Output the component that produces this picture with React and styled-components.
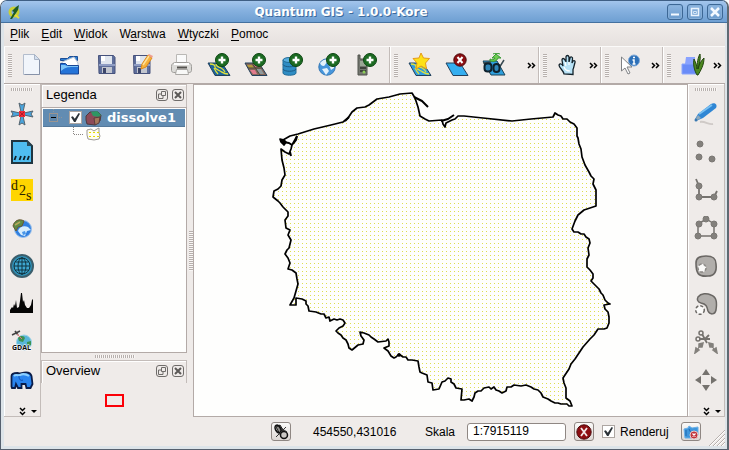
import React, { useState } from "react";
import styled, { createGlobalStyle } from "styled-components";

const GlobalStyle = createGlobalStyle`
  * {
    box-sizing: border-box;
  }
  body {
    margin: 0;
    background: #ffffff;
    font-family: "Liberation Sans", Arial, sans-serif;
    font-size: 12px;
    color: #000000;
  }
  button {
    font: inherit;
    color: inherit;
    margin: 0;
    padding: 0;
    border: none;
    background: none;
  }
  svg {
    display: block;
    flex: none;
  }
`;

const Window = styled.div`
  display: flex;
  flex-direction: column;
  min-height: 100vh;
  border: 1px solid #56606e;
  border-top-color: #3f5f84;
  border-right: 2px solid #5f6a72;
  border-radius: 7px 7px 0 0;
  background: #dde4e9;
  overflow: hidden;
`;

const TitleBar = styled.header`
  display: flex;
  align-items: center;
  height: 22px;
  padding: 0 4px 0 6px;
  background: linear-gradient(#a3c5ec, #86b1df 45%, #6e9fd2);
  border-bottom: 1px solid #44719f;

  h1 {
    flex: 1;
    margin: 0 8px 0 0;
    text-align: center;
    font-family: "DejaVu Sans", sans-serif;
    font-size: 12px;
    line-height: 20px;
    font-weight: bold;
    color: #ffffff;
    text-shadow: 1px 1px 0 #3c6a9c;
  }
`;

const WindowButtons = styled.div`
  display: flex;
  gap: 4px;
`;

const WindowButton = styled.button`
  display: flex;
  align-items: center;
  justify-content: center;
  width: 16px;
  height: 16px;
  border: 1px solid #3c6795;
  border-radius: 3px;
  background: linear-gradient(#8db5e0, #6c9ccd);
  box-shadow: inset 0 0 0 1px #86afd9;
`;

const Content = styled.div`
  display: flex;
  flex-direction: column;
  flex: 1;
  margin: 0 2px 3px 3px;
  background: #efebe9;
`;

const MenuBar = styled.nav`
  display: flex;
  align-items: center;
  gap: 12px;
  height: 23px;
  padding: 0 6px 2px;
  background: linear-gradient(#f1edeb, #e6e1de);

  button {
    line-height: 16px;
  }
  u {
    text-underline-offset: 2px;
  }
`;

const ToolbarRow = styled.div`
  display: flex;
  height: 38px;
  border-top: 1px solid #fbfaf9;
  border-bottom: 1px solid #b3aaa7;
`;

const Toolbar = styled.div`
  display: flex;
  align-items: center;
  flex: ${({ $grow }) => ($grow ? "1 0 auto" : "none")};
  padding: 0 0 0 4px;
  border-right: 1px solid #c3bcb9;
  box-shadow: inset 1px 0 0 #ffffff;

  &:last-child {
    border-right-color: #efebe9;
  }
`;

const Handle = styled.div`
  flex: none;
  width: ${({ $wide }) => ($wide ? $wide : 4)}px;
  height: ${({ $tall }) => ($tall ? $tall : 3)}px;
  background: ${({ $wide }) =>
    $wide
      ? "repeating-linear-gradient(90deg, #b7b0ad 0 1px, #f9f7f6 1px 2px)"
      : "repeating-linear-gradient(#b7b0ad 0 1px, #f9f7f6 1px 2px)"};
`;

const ToolButton = styled.button`
  display: flex;
  align-items: center;
  justify-content: center;
  flex: none;
  width: 37px;
  height: 36px;

  ${Handle} + & {
    margin-left: 3px;
  }
  &:last-child {
    margin-right: 4px;
  }
`;

const MoreButton = styled.button`
  display: flex;
  align-items: center;
  justify-content: center;
  width: 13px;
  height: 36px;
  margin-left: auto;
`;

const Body = styled.main`
  display: flex;
  flex: 1;
`;

const SideBar = styled.aside`
  display: flex;
  flex-direction: column;
  align-items: center;
  flex: none;
  width: 37px;
  padding-top: 4px;
  border-right: 1px solid #c3bcb9;
  border-bottom: 1px solid #c3bcb9;
  box-shadow: inset 1px 1px 0 #ffffff;
`;

const SideButton = styled(ToolButton)`
  width: 34px;
  height: 38px;
`;

const SideTools = styled.div`
  padding-top: 4px;
  flex: 1;

  ${SideButton} {
    margin: 0;
  }
`;

const SideMore = styled.button`
  display: flex;
  align-items: center;
  height: 10px;
  padding-left: 13px;
`;

const Docks = styled.div`
  display: flex;
  flex-direction: column;
  flex: none;
  width: 147px;
`;

const Dock = styled.section`
  display: flex;
  flex-direction: column;
  flex: ${({ $fill }) => ($fill ? 1 : "none")};
`;

const DockHeader = styled.div`
  display: flex;
  align-items: center;
  gap: 4px;
  height: 23px;
  margin-right: 1px;
  padding: 0 2px 2px 4px;
  border: 1px solid #c3bcb9;
  border-bottom: none;
  box-shadow: inset 1px 1px 0 #ffffff;

  h2 {
    flex: 1;
    margin: 0;
    font-size: 13px;
    line-height: 16px;
    font-weight: normal;
  }
`;

const DockButton = styled.button`
  display: flex;
  align-items: center;
  justify-content: center;
  width: 12px;
  height: 12px;
  border: 1px solid #6f6c6a;
  border-radius: 3px;
`;

const Tree = styled.ul`
  flex: 1;
  list-style: none;
  margin: 0 1px 0 0;
  padding: 1px;
  border: 1px solid #b3aaa7;
  background: #fefefd;
`;

const LayerRow = styled.li`
  display: flex;
  align-items: center;
  height: 18px;
  padding-left: 6px;
  background: #628cb2;
  border-bottom: 1px solid #55799b;
  color: #ffffff;
  font-family: "DejaVu Sans", sans-serif;
  font-size: 13px;
  line-height: 16px;
  font-weight: bold;

  label {
    margin-left: 5px;
  }
`;

const SymbolRow = styled.li`
  display: flex;
  align-items: center;
  height: 14px;
  padding-left: 30px;
`;

const TreeToggle = styled.button`
  display: flex;
  width: 20px;
  height: 17px;
`;

const CheckBox = styled.input.attrs({ type: "checkbox" })`
  appearance: none;
  display: grid;
  place-items: center;
  flex: none;
  width: 13px;
  height: 13px;
  margin: 0;
  border: 1px solid #ada6a2;
  background: #ffffff;

  &:checked::before {
    content: "";
    width: 9px;
    height: 9px;
    background: #2b3238;
    clip-path: polygon(0 45%, 20% 35%, 42% 65%, 85% 0, 100% 8%, 50% 100%, 34% 100%);
  }
`;

const Splitter = styled.div`
  display: flex;
  align-items: center;
  justify-content: center;
  flex: none;
  ${({ $vertical }) => ($vertical ? "width: 5px;" : "height: 7px;")}
`;

const Extent = styled.div`
  display: flex;
  align-items: center;
  justify-content: center;
  height: 34px;

  span {
    width: 19px;
    height: 13px;
    border: 2px solid #fb0007;
  }
`;

const Canvas = styled.section`
  display: flex;
  align-items: flex-start;
  justify-content: center;
  flex: 1;
  min-width: 0;
  overflow: hidden;
  background: #fefefd;
  border: 1px solid #b3aaa7;
`;

const StatusBar = styled.footer`
  display: flex;
  align-items: center;
  justify-content: flex-end;
  gap: 8px;
  height: 29px;
`;

const StatusText = styled.span`
  min-width: ${({ $wide }) => ($wide ? 118 : 34)}px;
  padding-left: ${({ $wide }) => ($wide ? 14 : 0)}px;
  line-height: 16px;
`;

const StatusButton = styled.button`
  display: flex;
  align-items: center;
  justify-content: center;
  width: 20px;
  height: 19px;
  border: 1px solid #8f8783;
  border-radius: 3px;
  background: linear-gradient(#fbfaf9, #ddd7d4);
`;

const ScaleLabel = styled.label`
  display: flex;
  align-items: center;
  gap: 8px;
`;

const ScaleInput = styled.input`
  width: 99px;
  height: 18px;
  padding: 0 5px 2px;
  border: 1px solid #8f8783;
  border-radius: 3px;
  background: #ffffff;
  font: inherit;
  color: inherit;
`;

const RenderLabel = styled.label`
  display: flex;
  align-items: center;
  gap: 5px;
  min-width: 71px;
  line-height: 16px;
`;

const Grip = styled.div`
  align-self: flex-end;
  width: 16px;
  height: 16px;
`;

/* ---- icons ---- */

const Icon = ({ size = 24, children }) => (
  <svg width={size} height={size} viewBox={`0 0 ${size} ${size}`} aria-hidden="true">
    {children}
  </svg>
);

const Plus = () => (
  <g>
    <circle cx="15" cy="7" r="6.5" fill="#1c6b22" stroke="#0c4512" />
    <path d="M15 3.5v7M11.5 7h7" stroke="#fff" strokeWidth="2.4" />
  </g>
);

const Cross = () => (
  <g>
    <circle cx="15" cy="7" r="6.2" fill="#8d0e12" stroke="#4e0a0c" />
    <path d="M12.5 4l5 6M17.5 4l-5 6" stroke="#fff" strokeWidth="2" />
  </g>
);

const Sheet = ({ fill = "#2a9fe0" }) => (
  <path d="M1 10h14l8 12.5H8z" fill={fill} stroke="#22405c" />
);

const Rivers = () => (
  <path
    d="M3 11c3 0 5 1 5 3s3 3 5 4 4 3 8 3M9 11c0 3 3 3 5 4s3 2 4 4M7 15c1 2 2 4 4 6"
    fill="none"
    stroke="#dfe03c"
    strokeWidth="1.3"
  />
);

const Floppy = () => (
  <g>
    <path d="M2.5 2.5h15l1.5 2v16h-16z" fill="#5f6f9c" stroke="#46527c" />
    <path d="M5 3h11v8H5z" fill="#dfe5ee" />
    <path d="M5 3h4v5H5z" fill="#fff" />
    <path d="M3 12h16" stroke="#8f9dc4" strokeWidth="2" />
    <path d="M6 14h10v6H6z" fill="#c2c6cf" />
    <path d="M7 15h3v5H7z" fill="#3c466a" />
  </g>
);

const QgisIcon = () => (
  <Icon size={16}>
    <circle cx="7" cy="8" r="4" fill="none" stroke="#c9cf34" strokeWidth="3" />
    <path d="M3 15L7 8 5 7l4-4 3-2-1 5-2 3-4 6z" fill="#1e5b22" />
    <path d="M8 11l4 3" stroke="#e4dc3c" strokeWidth="2" />
  </Icon>
);

const NewIcon = () => (
  <Icon>
    <path d="M1.5 1.5h11l5 5v15h-16z" fill="#f1f5fb" stroke="#b3bdcd" />
    <path d="M17.5 7v14.5h-15" fill="none" stroke="#8792a8" />
    <path d="M12.5 1.5v5h5z" fill="#d3dfef" stroke="#a9b4c6" />
  </Icon>
);

const OpenIcon = () => (
  <Icon>
    <path d="M1.5 5.5h7l2-2h8v4h-17z" fill="#2d7ed2" stroke="#1d4e96" />
    <path d="M3 9l12-5 4 6v4H3z" fill="#fff" stroke="#b6c2d2" />
    <path d="M1.5 10.5h5l2 2h11v8.500h-18z" fill="#2574d8" stroke="#1a4795" />
    <path d="M2 18c5-5 10-4 17-4v-1H8l-2-1H2z" fill="#7cc4f8" />
  </Icon>
);

const SaveIcon = () => (
  <Icon>
    <Floppy />
  </Icon>
);

const SaveAsIcon = () => (
  <Icon>
    <g transform="translate(-2 0)">
      <Floppy />
    </g>
    <path d="M8 16l1-5 6-9 4 3-6 9z" fill="#f7b23a" stroke="#dd8a1c" />
    <path d="M15 2l1-1 4 2-1 2z" fill="#ef9d8e" />
    <path d="M10 12l6-9" stroke="#fde09a" strokeWidth="1.5" />
  </Icon>
);

const PrintIcon = () => (
  <Icon>
    <path d="M6.5 1.5h10v9h-10z" fill="#fafafa" stroke="#bab8b5" />
    <path
      d="M1.5 13.5c0-3 2-4 5-4h10c3 0 5 1 5 4v4c0 1-1 2-2 2h-16c-1 0-2-1-2-2z"
      fill="#dcdbd8"
      stroke="#9d9b98"
    />
    <path d="M4 11h15" stroke="#fff" strokeWidth="2" />
    <path d="M7 14.5h10" stroke="#55534f" strokeWidth="2" />
    <path d="M6.5 16.5h11l1 5h-13z" fill="#f8f8f7" stroke="#aaa8a5" />
  </Icon>
);

const VectorIcon = () => (
  <Icon>
    <Sheet fill="#1b649b" />
    <Rivers />
    <Plus />
  </Icon>
);

const RasterIcon = () => (
  <Icon>
    <Sheet fill="#85675b" />
    <path d="M3 12h5l2 3H5z" fill="#b39a3c" />
    <path d="M9 11h5l2 3h-5z" fill="#e06a86" />
    <path d="M6 17h5l2 4H9z" fill="#e27b8e" />
    <path d="M12 16h5l3 5h-5z" fill="#8f9a9c" />
    <path d="M4 15h14M8 10l8 12" stroke="#4c4a3a" />
    <Plus />
  </Icon>
);

const DatabaseIcon = () => (
  <Icon>
    <path d="M2 7v13c0 3 13 3 13 0V7z" fill="#2f8dc4" stroke="#236c98" />
    <ellipse cx="8.5" cy="7" rx="6.5" ry="2.5" fill="#58aede" stroke="#236c98" />
    <path d="M2 11.5c1 3 12 3 13 0M2 16c1 3 12 3 13 0" fill="none" stroke="#1c5b85" />
    <Plus />
  </Icon>
);

const WmsIcon = () => (
  <Icon>
    <circle cx="9" cy="14" r="8.2" fill="#4796dc" stroke="#3577b4" />
    <path
      d="M2 10c3-4 7-4 8-3s-2 3-3 5-4 1-5-2zM11 12l5-2v5l-3 2zM4 16l5-1 2 3-3 4z"
      fill="#e3f1fb"
    />
    <Plus />
  </Icon>
);

const GpsIcon = () => (
  <Icon>
    <path d="M3 6V2h2v4h7v16H3V7z" fill="#73766f" stroke="#50534c" />
    <path d="M5 8h6v5H5z" fill="#9aa795" />
    <path d="M5 15h6M5 18h6" stroke="#2e332c" strokeWidth="1.5" />
    <circle cx="9" cy="19" r="1.5" fill="#8ccf57" />
    <Plus />
  </Icon>
);

const NewLayerIcon = () => (
  <Icon>
    <Sheet fill="#2f9ce0" />
    <Rivers />
    <path
      d="M13 0l2.5 5 6 .5-4 4.5 1 6-5.500-3-5 3 1-6-4-4.500 6-.5z"
      fill="#fde116"
      stroke="#e59a17"
    />
  </Icon>
);

const RemoveLayerIcon = () => (
  <Icon>
    <Sheet fill="#35aef0" />
    <Cross />
  </Icon>
);

const OverviewIcon = () => (
  <Icon>
    <path d="M1 8h14l8 14H9z" fill="#2f9fdc" stroke="#1b4258" />
    <path d="M1 10l8-1M17 15l5-8" stroke="#3a4a52" strokeWidth="1.5" />
    <rect x="2.5" y="10.5" width="7" height="8" rx="3" fill="#2f86b8" stroke="#0f222e" strokeWidth="2" />
    <rect x="11.5" y="11" width="6" height="8" rx="3" fill="#2f86b8" stroke="#0f222e" strokeWidth="2" />
    <path
      d="M8 8c4 1 7 0 8-3h3l-5-4-4 4h3c-1 2-3 2-5 1zM18 1c-3-1-5-1-7 0"
      fill="#6ccc50"
      stroke="#3b9a36"
    />
  </Icon>
);

const HandIcon = () => (
  <Icon>
    <path
      d="M7 21c0-3-5-6-5-9 1-2 3-1 4 1L5 7c0-2 2-2 3 0l1 2V4c0-2 2.500-2 3 0v5l1-4c.5-2 3-1 2.500 1L15 10l1-2c1-1 2.500 0 2 1.500-1 3-1 5-2 7v5z"
      fill="#b8e2f6"
      stroke="#14222b"
      strokeWidth="1.3"
    />
    <path d="M7 14c1 3 3 4 6 4M8 9l1 4M12 9v3" fill="none" stroke="#fff" strokeWidth="1.2" />
  </Icon>
);

const IdentifyIcon = () => (
  <Icon>
    <path d="M2.5 4v14l3.5-3 3 6 2-1-3-6h5z" fill="#fff" stroke="#7f8184" />
    <circle cx="15" cy="7.5" r="5.5" fill="#2d70b8" stroke="#7fa9d8" />
    <path d="M14 4.5h2M13.500 7H15v4m-1.500 0h3" stroke="#fff" strokeWidth="1.5" fill="none" />
  </Icon>
);

const GrassIcon = () => (
  <Icon>
    <path d="M5 4h9v7H4z" fill="#8aa3ff" />
    <path d="M1 11h14l3 10H1z" fill="#6a8cf8" stroke="#8aa5fb" />
    <path
      d="M16 22C13 17 12 11 13 6c2 4 3 7 3 10 0-6 1-12 3-15 1 6-1 10-2 15 1-5 3-8 6-11 0 7-3 12-6 17z"
      fill="#4c8820"
      stroke="#23470f"
    />
  </Icon>
);

const CrossIcon = () => (
  <Icon>
    <path
      d="M11 10L9 1l3 2 3-2-2 9M11 14l-2 9 3-2 3 2-2-9M10 11L1 9l2 3-2 3 9-2M14 11l9-2-2 3 2 3-9-2"
      fill="#4aa5de"
      stroke="#56646e"
      strokeWidth="1"
      strokeLinejoin="round"
    />
    <path d="M9 9h6v6H9z" fill="#f02a38" />
    <path d="M10 10l4 4M14 10l-4 4" stroke="#b01a28" />
  </Icon>
);

const DelimitedIcon = () => (
  <Icon>
    <path d="M2 1h15l5 5v17H2z" fill="#4fbdf0" stroke="#1f3540" strokeWidth="2" />
    <path d="M17 1v5h5z" fill="#2b4a58" />
    <path
      d="M6 16l-1.500 4M11 16l-1.500 4M15 16l-1.500 4M19 16l-1.500 4"
      stroke="#102028"
      strokeWidth="1.8"
    />
  </Icon>
);

const Dxf2ShpIcon = () => (
  <Icon>
    <path d="M1 1h22v22H1z" fill="#ffd500" />
    <g fontFamily="Liberation Serif, serif" fontSize="14" fill="#2b2400">
      <text x="1" y="12">
        d
      </text>
      <text x="9" y="17">
        2
      </text>
      <text x="16" y="22">
        s
      </text>
    </g>
  </Icon>
);

const GeorefIcon = () => (
  <Icon>
    <circle cx="13" cy="13" r="8.5" fill="#3180e0" stroke="#9cc2ec" />
    <path d="M8 15c1-4 6-6 10-4l3 3-4 1-2 5-4-1z" fill="#d7edfd" />
    <path d="M12 16l3-1 1 3-3 1z" fill="#4a96e8" />
    <path d="M3 10c1-5 6-8 11-5l-2 5-4 1-2 4z" fill="#5c8a46" stroke="#6a5833" />
    <path d="M5 9l5-3" stroke="#b9a95c" strokeWidth="1.5" />
  </Icon>
);

const GraticuleIcon = () => (
  <Icon>
    <circle cx="12" cy="12" r="11" fill="#2f91b8" stroke="#3b5e6c" strokeWidth="2" />
    <circle cx="12" cy="12" r="8" fill="#3ea7d2" stroke="#10333f" />
    <ellipse cx="12" cy="12" rx="4" ry="8" fill="none" stroke="#10333f" />
    <path d="M12 3v18M4 12h16M5.5 8h13M5.5 16h13" stroke="#10333f" />
  </Icon>
);

const HistogramIcon = () => (
  <Icon>
    <path
      d="M0 21v-3l2-3 1 1 1-4 1 2 1-6 1 8 2-1 1-6 1-8 1 0 1 9 1-2 1 5 2 3 2 0 2-3 1-5 1-1v14z"
      fill="#050505"
    />
  </Icon>
);

const GdalIcon = () => (
  <Icon>
    <circle cx="14" cy="12.5" r="7.5" fill="#58b6d8" stroke="#9ed3e5" />
    <path d="M8 8c3-3 6-2 7 0l-2 4-4-1zM17 12l4-1v4l-4 2z" fill="#3d9251" />
    <path d="M2 5l8-4M5 1l3 4" stroke="#444" strokeWidth="1.6" />
    <path d="M7 4l5 5" stroke="#e2777b" />
    <text
      x="2"
      y="20"
      fontFamily="Open Sans, sans-serif"
      fontWeight="bold"
      fontSize="7"
      fill="#0b0b0b"
      stroke="#fff"
      strokeWidth="1"
      paintOrder="stroke"
    >
      GDAL
    </text>
  </Icon>
);

const SpitIcon = () => (
  <Icon>
    <path
      d="M1.5 18.5V8c0-3 3-3 6-3 2 0 3 1 4 0 4-1 9-1 10 3l1 8-2 4h-4l-1-4h-4v4H8l-2-4-1 4H2z"
      fill="#2a84ee"
      stroke="#0a1c48"
      strokeWidth="1.8"
    />
    <path d="M4 8c2-2 4 0 6-1s6-1 9 1" fill="none" stroke="#8cd0ff" strokeWidth="2" />
    <path d="M9 8c0 4 2 5 4 4" fill="none" stroke="#0a4ab0" />
  </Icon>
);

const PencilIcon = () => (
  <Icon>
    <path d="M6 20c5-1 9 3 13 2" fill="none" stroke="#cfcac7" strokeWidth="2" />
    <path d="M1 17l3-5L17 2c3-2 7 0 5 4L9 16l-7 3z" fill="#2f86d4" />
    <path d="M5 12L18 3" stroke="#79c0f2" strokeWidth="1.8" />
    <path d="M1 18l3-5 3 3-5 3z" fill="#8fa8ba" />
    <circle cx="2" cy="18" r="1.5" fill="#3a78b0" />
  </Icon>
);

const Nodes = ({ points }) =>
  points.map(([x, y]) => (
    <circle key={`${x}-${y}`} cx={x} cy={y} r="3" fill="#83807c" stroke="#7b7874" />
  ));

const PointsIcon = () => (
  <Icon>
    <Nodes points={[[6, 4], [5, 17], [18, 19]]} />
  </Icon>
);

const LineIcon = () => (
  <Icon>
    <path d="M2 1l3 7v11h15l3-6" fill="none" stroke="#75726e" strokeWidth="1.8" />
    <Nodes points={[[5, 8], [5, 19], [20, 19]]} />
  </Icon>
);

const PolygonIcon = () => (
  <Icon>
    <path d="M12.5 3L20 8v12H4V8z" fill="none" stroke="#75726e" strokeWidth="1.5" />
    <Nodes points={[[12, 3], [5, 8], [20, 8], [4, 20], [20, 20]]} />
  </Icon>
);

const RingIcon = () => (
  <Icon>
    <path
      d="M2 9c0-5 3-7 10-7s10 2 10 8c1 8-2 12-8 12C4 23 2 19 2 9z"
      fill="#b1aeab"
      stroke="#6a6764"
      strokeWidth="1.6"
    />
    <circle cx="8" cy="14" r="4" fill="#fbfaf9" stroke="#8a8784" strokeWidth="1.5" strokeDasharray="3 2" />
  </Icon>
);

const IslandIcon = () => (
  <Icon>
    <path
      d="M4 5c3-4 9-4 13-2 6 2 6 8 5 15-1 5-6 5-8 1-1-5-2-7-7-8-4-1-4-4-3-6z"
      fill="#b1aeab"
      stroke="#6a6764"
      strokeWidth="1.5"
    />
    <circle cx="6" cy="18" r="4.3" fill="#fbfaf9" stroke="#6a6764" strokeWidth="1.5" strokeDasharray="3 2" />
  </Icon>
);

const SplitIcon = () => (
  <Icon>
    <path d="M8 4l5 9M5 9l11 0M10 10l5-5" fill="none" stroke="#75726e" strokeWidth="1.8" />
    <circle cx="7" cy="3" r="2" fill="none" stroke="#75726e" strokeWidth="1.5" />
    <circle cx="4" cy="9" r="2" fill="none" stroke="#75726e" strokeWidth="1.5" />
    <path d="M2 22l5-8M22 22l-6-8" stroke="#75726e" />
    <path
      d="M1 23l1-5 3 2zM23 23l-1-5-3 2zM5 14l4-1-1 4-3 0zM19 14l-4-1 1 4 3 0z"
      fill="#83807c"
      stroke="#83807c"
      strokeWidth="1.5"
    />
  </Icon>
);

const MoveIcon = () => (
  <Icon>
    <path d="M12 1l4 6H8zM12 23l4-6H8zM1 12l6-4v8zM23 12l-6-4v8z" fill="#75726e" />
  </Icon>
);

const ChevronIcon = () => (
  <svg width="9" height="7" viewBox="0 0 9 7" aria-hidden="true">
    <path d="M1 1l2.500 2.500L1 6M5 1l2.500 2.500L5 6" fill="none" stroke="#000" strokeWidth="1.5" />
  </svg>
);

const SideChevronIcon = () => (
  <svg width="20" height="9" viewBox="0 0 20 9" aria-hidden="true">
    <path d="M1 1l2.500 2.500L6 1M1 5l2.500 2.500L6 5" fill="none" stroke="#000" strokeWidth="1.5" />
    <path d="M12 3h6l-3 3z" />
  </svg>
);

/* ---- data ---- */

const menus = [
  ["", "P", "lik"],
  ["", "E", "dit"],
  ["", "W", "idok"],
  ["W", "a", "rstwa"],
  ["", "W", "tyczki"],
  ["", "P", "omoc"],
];

const toolbars = [
  {
    name: "Plik",
    tools: [
      ["Nowy", NewIcon],
      ["Otwórz", OpenIcon],
      ["Zapisz", SaveIcon],
      ["Zapisz jako", SaveAsIcon],
      ["Drukuj", PrintIcon],
      ["Dodaj wektor", VectorIcon],
      ["Dodaj raster", RasterIcon],
      ["Dodaj PostGIS", DatabaseIcon],
      ["Dodaj WMS", WmsIcon],
      ["GPS", GpsIcon],
    ],
  },
  {
    name: "Warstwy",
    grow: true,
    more: true,
    tools: [
      ["Nowa warstwa", NewLayerIcon],
      ["Usuń warstwę", RemoveLayerIcon],
      ["Przegląd", OverviewIcon],
    ],
  },
  { name: "Nawigacja", more: true, tools: [["Przesuń", HandIcon]] },
  { name: "Atrybuty", more: true, tools: [["Informacje", IdentifyIcon]] },
  { name: "GRASS", more: true, tools: [["GRASS", GrassIcon]] },
];

const plugins = [
  ["Współrzędne", CrossIcon],
  ["Tekst rozdzielany", DelimitedIcon],
  ["Dxf2Shp", Dxf2ShpIcon],
  ["Georeferencja", GeorefIcon],
  ["Siatka", GraticuleIcon],
  ["Histogram", HistogramIcon],
  ["GDAL", GdalIcon],
  ["SPIT", SpitIcon],
];

const digitizing = [
  ["Edycja", PencilIcon],
  ["Punkt", PointsIcon],
  ["Linia", LineIcon],
  ["Poligon", PolygonIcon],
  ["Dodaj pierścień", RingIcon],
  ["Dodaj wyspę", IslandIcon],
  ["Podziel", SplitIcon],
  ["Przenieś", MoveIcon],
];

const border =
  "M282 140L289 136 297 134 313 129 330 125 342 122 347 118 351 112 356 108 364 107 368 105 376 99 388 97 399 94 411 93 414 98 " +
  "417 107 419 116 424 119 428 121 441 120 442 124 444 127 445 123 451 120 454 119 457 116 463 116 482 118 511 121 530 119 " +
  "552 117 554 113 557 115 560 116 562 119 566 119 569 122 573 124 576 128 576 136 577 138 578 144 580 149 581 157 584 165 588 172 590 176 593 179 " +
  "592 184 595 190 595 206 583 210 577 215 574 221 571 229 573 232 577 232 580 234 583 234 585 237 588 239 589 243 587 248 588 255 586 259 586 267 " +
  "589 270 592 274 592 278 590 281 594 285 598 289 600 293 602 295 604 300 607 303 609 304 603 305 604 309 607 312 608 317 608 323 606 328 603 329 597 329 593 335 589 339 582 347 " +
  "578 353 574 359 570 364 568 369 562 378 563 383 565 388 565 398 569 401 571 406 568 406 566 404 560 404 557 403 554 403 550 401 547 399 542 397 540 393 537 390 533 389 530 387 525 385 " +
  "520 386 513 385 510 387 506 387 505 391 501 393 498 391 495 390 493 387 490 389 488 387 483 388 480 391 477 391 474 393 473 397 471 401 468 399 463 400 460 400 461 389 455 388 " +
  "453 384 450 382 450 379 447 378 444 381 441 382 438 389 432 390 431 383 427 382 426 375 421 373 419 372 418 367 417 361 411 360 407 360 405 357 402 357 398 354 " +
  "395 357 393 358 390 356 387 351 383 348 388 346 388 342 387 339 385 341 377 342 373 339 370 337 368 335 363 333 359 332 360 336 363 340 362 344 357 345 351 350 348 348 " +
  "347 344 345 340 342 338 340 335 337 333 335 331 338 328 342 326 344 323 342 320 339 319 336 320 333 319 329 321 328 317 325 318 323 314 320 314 315 312 308 311 307 306 305 304 305 301 301 299 295 298 295 305 289 305 " +
  "293 298 297 284 296 279 295 273 291 270 287 269 289 263 287 258 284 254 286 250 288 248 290 240 287 235 289 230 285 228 284 220 287 216 287 212 282 207 279 203 277 201 " +
  "272 197 273 191 277 189 280 186 281 180 284 175 283 168 281 160 280 149 284 152 288 154 290 149 291 145 296 136";

const MapView = () => (
  <svg width="492" height="331" viewBox="194 85 492 331" role="img" aria-label="dissolve1">
    <defs>
      <pattern id="dots" width="4" height="4" patternUnits="userSpaceOnUse">
        <rect x="1" y="3" width="1" height="1" fill="#dede50" />
      </pattern>
    </defs>
    <path d={`${border}z`} fill="url(#dots)" />
    <g fill="none" stroke="#000" strokeWidth="1.7" strokeLinejoin="round">
      <path d={border} />
      <path d="M413 97l8 4 3 3 3 3M440 121l7-2 6-4" strokeWidth="2" />
      <path d="M282 142l6 1 3 2M296 136l-1 4-3 4M289 152l1 4" strokeWidth="2" />
      <path d="M279 139l4 1 2 2-2 3-3-3z" fill="#000" />
      <circle cx="398" cy="355" r="1" fill="#000" />
      <path d="M344 121l4-4" strokeWidth="2" />
    </g>
  </svg>
);

/* ---- parts ---- */

const DockTitle = ({ title }) => (
  <DockHeader>
    <h2>{title}</h2>
    <DockButton aria-label="Odłącz">
      <svg width="8" height="8" viewBox="0 0 8 8">
        <path d="M3.5.5h4v4h-4zM3 3H.5v4.500H5V5" fill="none" stroke="#6f6c6a" />
      </svg>
    </DockButton>
    <DockButton aria-label="Zamknij">
      <svg width="8" height="8" viewBox="0 0 8 8">
        <path d="M1 1l6 6M7 1L1 7" stroke="#5c5957" strokeWidth="2" />
      </svg>
    </DockButton>
  </DockHeader>
);

const SidePanel = ({ tools, name }) => (
  <SideBar aria-label={name}>
    <Handle $wide={22} />
    <SideTools>
      {tools.map(([label, Glyph]) => (
        <SideButton key={label} aria-label={label}>
          <Glyph />
        </SideButton>
      ))}
    </SideTools>
    <SideMore aria-label="Więcej">
      <SideChevronIcon />
    </SideMore>
  </SideBar>
);

export default function App() {
  const [scale, setScale] = useState("1:7915119");
  const [render, setRender] = useState(true);
  const [visible, setVisible] = useState(true);

  return (
    <>
      <GlobalStyle />
      <Window>
        <TitleBar>
          <QgisIcon />
          <h1>Quantum GIS - 1.0.0-Kore</h1>
          <WindowButtons>
            <WindowButton aria-label="Minimalizuj">
              <svg width="10" height="10">
                <path d="M1 7.500h8" stroke="#f4f9ff" strokeWidth="2" />
              </svg>
            </WindowButton>
            <WindowButton aria-label="Maksymalizuj">
              <svg width="10" height="10">
                <path d="M1.5 1.5h7v7h-7z" fill="none" stroke="#eaf3fd" strokeWidth="1.5" />
                <path d="M3.5 4.5h3v2h-3z" fill="none" stroke="#cfe2f5" />
              </svg>
            </WindowButton>
            <WindowButton aria-label="Zamknij">
              <svg width="10" height="10">
                <path d="M1 1l8 8M9 1L1 9" stroke="#f4f9ff" strokeWidth="2.5" />
              </svg>
            </WindowButton>
          </WindowButtons>
        </TitleBar>
        <Content>
          <MenuBar>
            {menus.map(([before, key, after]) => (
              <button key={before + key + after}>
                {before}
                <u>{key}</u>
                {after}
              </button>
            ))}
          </MenuBar>
          <ToolbarRow>
            {toolbars.map(({ name, tools, grow, more }) => (
              <Toolbar key={name} $grow={grow} aria-label={name}>
                <Handle $tall={23} />
                {tools.map(([label, Glyph]) => (
                  <ToolButton key={label} aria-label={label}>
                    <Glyph />
                  </ToolButton>
                ))}
                {more && (
                  <MoreButton aria-label="Więcej">
                    <ChevronIcon />
                  </MoreButton>
                )}
              </Toolbar>
            ))}
          </ToolbarRow>
          <Body>
            <SidePanel name="Wtyczki" tools={plugins} />
            <Docks>
              <Dock $fill>
                <DockTitle title="Legenda" />
                <Tree>
                  <LayerRow>
                    <TreeToggle aria-label="Zwiń">
                      <svg width="20" height="17">
                        <path d="M4.5 0v4M10 8.500h4" stroke="#8f959b" strokeDasharray="1 1" />
                        <rect x=".5" y="4.5" width="8" height="8" fill="#5e87ac" stroke="#9a9591" />
                        <path d="M2 8.500h5" stroke="#000" />
                      </svg>
                    </TreeToggle>
                    <CheckBox
                      id="layer"
                      checked={visible}
                      onChange={(e) => setVisible(e.target.checked)}
                    />
                    <svg width="20" height="16">
                      <path d="M4 6l4-4 8 0 3 3-1 6-5 4-8-1-1-4z" fill="#8c4a58" stroke="#4c3a3e" />
                      <path d="M9 2l6-1 4 4-2 2-6-1z" fill="#2e9663" />
                      <path d="M12 8l6-1-1 6-4 2z" fill="#a5765a" stroke="#5a3c3c" />
                    </svg>
                    <label htmlFor="layer">dissolve1</label>
                  </LayerRow>
                  <SymbolRow>
                    <svg width="28" height="14">
                      <path d="M.5 0v8M1 7.500h9" stroke="#8a8683" strokeDasharray="1 1" fill="none" />
                      <path
                        d="M14 3l4-1 3 2 3-2 2-1v5l1 3-1 3-5 1-6-1-1-4z"
                        fill="#fffef0"
                        stroke="#9c9995"
                      />
                      <path d="M16 5.500h10M16 9.500h10" stroke="#e6dc00" strokeWidth="1" strokeDasharray="2 2" />
                    </svg>
                  </SymbolRow>
                </Tree>
              </Dock>
              <Splitter>
                <Handle $wide={40} />
              </Splitter>
              <Dock>
                <DockTitle title="Overview" />
                <Extent>
                  <span />
                </Extent>
              </Dock>
            </Docks>
            <Splitter $vertical>
              <Handle $tall={40} />
            </Splitter>
            <Canvas>{visible && <MapView />}</Canvas>
            <SidePanel name="Digitalizacja" tools={digitizing} />
          </Body>
          <StatusBar>
            <StatusButton aria-label="Zasięg">
              <Icon size={16}>
                <path d="M3 3l4-2 6 10-4 3z" fill="#8d8b88" stroke="#1c1b1a" />
                <ellipse cx="5" cy="5" rx="2.5" ry="4" transform="rotate(-30 5 5)" fill="none" stroke="#111" strokeWidth="1.6" />
                <circle cx="11" cy="11" r="3.500" fill="#cbc8c5" stroke="#111" strokeWidth="1.500" />
                <path d="M3 13l10-10M8 4l6 4" stroke="#333" />
              </Icon>
            </StatusButton>
            <StatusText $wide>454550,431016</StatusText>
            <ScaleLabel>
              <StatusText>Skala</StatusText>
              <ScaleInput value={scale} onChange={(e) => setScale(e.target.value)} />
            </ScaleLabel>
            <StatusButton aria-label="Zatrzymaj">
              <Icon size={16}>
                <circle cx="8" cy="8" r="7.2" fill="#8d0e12" stroke="#4e0a0c" />
                <path d="M5 4l6 8M11 4l-6 8" stroke="#f3e9e9" strokeWidth="1.8" />
              </Icon>
            </StatusButton>
            <RenderLabel>
              <CheckBox checked={render} onChange={(e) => setRender(e.target.checked)} />
              Renderuj
            </RenderLabel>
            <StatusButton aria-label="Układ współrzędnych">
              <Icon size={16}>
                <path d="M1 5l4-1 1-2 3 2 6-1v8l-3 3H2z" fill="#3f96dc" stroke="#6ab0e8" />
                <path d="M3 6v6M6 5l2 4" stroke="#1f66ac" />
                <circle cx="11" cy="11" r="4" fill="#c0323a" stroke="#e7c9c9" />
                <path d="M9.5 9.5l3 3M12.5 9.500l-3 3" stroke="#fff" strokeWidth="1.300" />
              </Icon>
            </StatusButton>
            <Grip>
              <svg width="16" height="16">
                <path d="M0 16L16 0M4 16L16 4M8 16l8-8M12 16l4-4" stroke="#b7b0ad" />
                <path d="M1 16L16 1M5 16L16 5M9 16l7-7M13 16l3-3" stroke="#fff" />
              </svg>
            </Grip>
          </StatusBar>
        </Content>
      </Window>
    </>
  );
}
